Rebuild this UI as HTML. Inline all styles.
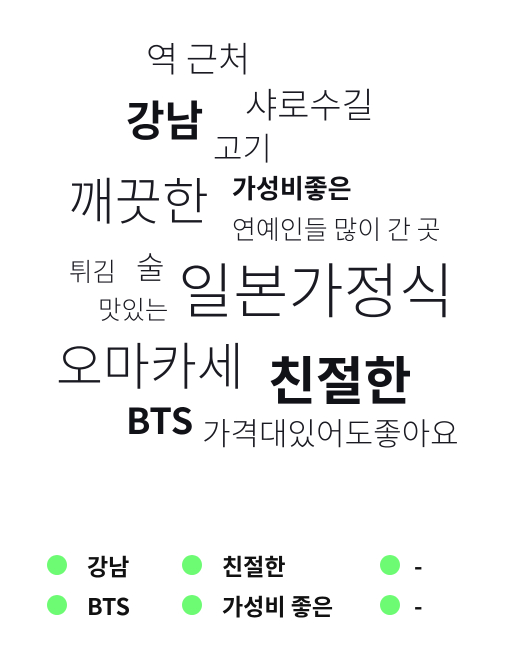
<!DOCTYPE html>
<html><head><meta charset="utf-8"><style>
html,body{margin:0;padding:0;background:#fff;}
body{width:524px;height:672px;position:relative;overflow:hidden;font-family:"Liberation Sans","Noto Sans CJK KR",sans-serif;color:#1a1a22;}
.w{position:absolute;white-space:nowrap;line-height:1;font-family:"Noto Sans CJK KR",sans-serif;font-weight:300;}
.b{font-weight:700;color:#111118;}
.dot{position:absolute;width:20px;height:20px;border-radius:50%;background:#6cfb73;}
.lg{position:absolute;font-family:"Noto Sans CJK KR",sans-serif;font-weight:700;font-size:23px;line-height:1;color:#111;}
</style></head><body>
<div class="w" style="left:146px;top:40px;font-size:35px">역 근처</div>
<div class="w" style="left:245px;top:86px;font-size:35px">샤로수길</div>
<div class="w b" style="left:126px;top:98px;font-size:42px">강남</div>
<div class="w" style="left:213px;top:131px;font-size:32px">고기</div>
<div class="w" style="left:68px;top:173px;font-size:51px">깨끗한</div>
<div class="w b" style="left:232px;top:175px;font-size:26px">가성비좋은</div>
<div class="w" style="left:232px;top:216px;font-size:26px">연예인들 많이 간 곳</div>
<div class="w" style="left:69px;top:258px;font-size:25.5px">튀김</div>
<div class="w" style="left:136px;top:250px;font-size:31px">술</div>
<div class="w" style="left:178px;top:258px;font-size:60px">일본가정식</div>
<div class="w" style="left:98px;top:296px;font-size:25.5px">맛있는</div>
<div class="w" style="left:56px;top:338px;font-size:51px">오마카세</div>
<div class="w b" style="left:268px;top:352px;font-size:52px">친절한</div>
<div class="w b" style="left:126px;top:401px;font-size:36px">BTS</div>
<div class="w" style="left:202px;top:416px;font-size:31px">가격대있어도좋아요</div>

<div class="dot" style="left:47px;top:555px"></div>
<div class="dot" style="left:182px;top:555px"></div>
<div class="dot" style="left:380px;top:555px"></div>
<div class="dot" style="left:47px;top:595px"></div>
<div class="dot" style="left:182px;top:595px"></div>
<div class="dot" style="left:380px;top:595px"></div>
<div class="lg" style="left:87px;top:554px">강남</div>
<div class="lg" style="left:222px;top:554px">친절한</div>
<div class="lg" style="left:414px;top:554px">-</div>
<div class="lg" style="left:87px;top:594px">BTS</div>
<div class="lg" style="left:222px;top:594px">가성비 좋은</div>
<div class="lg" style="left:414px;top:594px">-</div>
</body></html>
